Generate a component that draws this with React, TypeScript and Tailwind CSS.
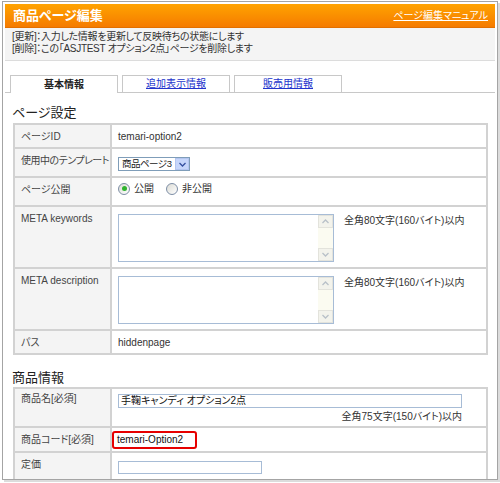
import React from 'react'

const NOTE = '全角80文字(160バイト)以内'

function Radio({ checked }: { checked?: boolean }) {
  return (
    <span className="w-[12px] h-[12px] rounded-full border border-[#7d8ea6] bg-gradient-to-br from-[#dcdcd6] to-white flex items-center justify-center">
      {checked && <span className="w-[5px] h-[5px] rounded-full bg-[#2fb32f]" />}
    </span>
  )
}

function Chevron({ up, color = '#b8c0c8' }: { up?: boolean; color?: string }) {
  return (
    <svg width="7" height="5" viewBox="0 0 7 5">
      <path d={up ? 'M0.5 4 L3.5 1 L6.5 4' : 'M0.5 1 L3.5 4 L6.5 1'} fill="none" stroke={color} strokeWidth="1.3" />
    </svg>
  )
}

function TextArea() {
  return (
    <div className="w-[216px] h-[48px] border border-[#a7bcd6] bg-white flex justify-end">
      <div className="w-[15px] h-full bg-[#fbfbf1] flex flex-col justify-between">
        <span className="h-[13px] border border-[#e3e3dc] bg-[#f3f3ec] flex items-center justify-center">
          <Chevron up />
        </span>
        <span className="h-[13px] border border-[#e3e3dc] bg-[#f3f3ec] flex items-center justify-center">
          <Chevron />
        </span>
      </div>
    </div>
  )
}

function Label({ children, className = '' }: { children: React.ReactNode; className?: string }) {
  return (
    <div className={`w-[97px] shrink-0 bg-[#f4f4f4] border-r-2 border-[#d2d2d2] pl-[6px] text-[#444] whitespace-nowrap ${className}`}>
      {children}
    </div>
  )
}

export default function App() {
  return (
    <div className="w-[500px] h-[483px] bg-white pt-px pl-[2px] text-[10px] leading-[12px] text-[#333] font-['Liberation_Sans','Noto_Sans_CJK_JP',sans-serif] [font-feature-settings:'palt']">
      <div className="w-[496px] h-[479px] border border-[#a4a4a4] p-[2px] overflow-hidden shadow-[2px_2px_0_#dcdcdc]">
        {/* Header */}
        <div className="h-[24px] bg-gradient-to-b from-[#ffa300] to-[#f57b00] border-b border-[#e27000] flex items-center justify-between pl-[8px] pr-[7px]">
          <span className="text-white text-[13px] font-bold leading-[16px]">商品ページ編集</span>
          <span className="text-white underline text-[10px]">ページ編集マニュアル</span>
        </div>

        {/* Messages */}
        <div className="bg-[#f4f4f4] border-b border-[#dcdcdc] pt-[3px] pb-[5px] pl-[7px] tracking-[-0.3px]">
          <p>[更新]：入力した情報を更新して反映待ちの状態にします</p>
          <p>[削除]：この「ASJTEST オプション2点」ページを削除します</p>
        </div>

        {/* Tabs */}
        <div className="mt-[14px] flex gap-[4px] border-b border-[#c8c8c8] pl-[5px]">
          <div className="w-[108px] h-[18px] -mb-px border border-b-0 border-[#c8c8c8] bg-white flex items-center justify-center font-bold text-[#222]">
            基本情報
          </div>
          <div className="w-[108px] h-[17px] border border-b-0 border-[#c8c8c8] bg-white flex items-center justify-center text-[#2233cc] underline">
            追加表示情報
          </div>
          <div className="w-[108px] h-[17px] border border-b-0 border-[#c8c8c8] bg-white flex items-center justify-center text-[#2233cc] underline">
            販売用情報
          </div>
        </div>

        {/* Page settings */}
        <h2 className="mt-[12px] mb-[2px] pl-[7px] text-[13px] leading-[16px] text-[#222]">ページ設定</h2>
        <div className="ml-[8px] w-[475px] border-2 border-b-0 border-[#d2d2d2]">
          <div className="flex h-[24px] border-b-2 border-[#d2d2d2]">
            <Label className="pt-[6px]">ページID</Label>
            <div className="pl-[6px] pt-[6px]">temari-option2</div>
          </div>
          <div className="flex h-[29px] border-b-2 border-[#d2d2d2]">
            <Label className="pt-[6px] tracking-[-0.5px]">使用中のテンプレート</Label>
            <div className="pl-[6px] pt-[8px]">
              <div className="w-[72px] h-[14px] border border-[#7f9db9] bg-white flex items-center justify-between pl-[3px] whitespace-nowrap">
                <span className="text-[#222] text-[9.5px] tracking-[-0.5px]">商品ページ3</span>
                <span className="w-[14px] h-[12px] shrink-0 bg-[#c6d6fb] border border-[#b4c6f0] flex items-center justify-center">
                  <Chevron color="#3450a0" />
                </span>
              </div>
            </div>
          </div>
          <div className="flex h-[29px] border-b-2 border-[#d2d2d2]">
            <Label className="pt-[6px]">ページ公開</Label>
            <div className="pl-[6px] pt-[6px] flex items-center gap-[4px] h-[13px] mt-px">
              <Radio checked />
              <span className="mr-[8px]">公開</span>
              <Radio />
              <span>非公開</span>
            </div>
          </div>
          <div className="flex h-[62px] border-b-2 border-[#d2d2d2]">
            <Label className="pt-[6px]">META keywords</Label>
            <div className="pl-[6px] pt-[7px] flex gap-[10px]">
              <TextArea />
              <span className="pt-px">{NOTE}</span>
            </div>
          </div>
          <div className="flex h-[62px] border-b-2 border-[#d2d2d2]">
            <Label className="pt-[6px]">META description</Label>
            <div className="pl-[6px] pt-[7px] flex gap-[10px]">
              <TextArea />
              <span className="pt-px">{NOTE}</span>
            </div>
          </div>
          <div className="flex h-[24px] border-b-2 border-[#d2d2d2]">
            <Label className="pt-[6px]">パス</Label>
            <div className="pl-[6px] pt-[6px]">hiddenpage</div>
          </div>
        </div>

        {/* Product info */}
        <h2 className="mt-[15px] mb-px pl-[7px] text-[13px] leading-[16px] text-[#222]">商品情報</h2>
        <div className="ml-[8px] w-[475px] border-2 border-b-0 border-[#d2d2d2]">
          <div className="flex h-[39px] border-b-2 border-[#d2d2d2]">
            <Label className="pt-[4px]">商品名[必須]</Label>
            <div className="pl-[6px] pt-[5px] flex flex-col items-end">
              <div className="w-[344px] h-[14px] border border-[#a7bcd6] bg-white pl-[2px] flex items-center text-[#111]">
                手鞠キャンディ オプション2点
              </div>
              <span className="mt-[3px]">全角75文字(150バイト)以内</span>
            </div>
          </div>
          <div className="flex h-[25px] border-b-2 border-[#d2d2d2]">
            <Label className="flex items-center">商品コード[必須]</Label>
            <div className="flex items-center">
              <span className="h-[18px] border-2 border-[#e60000] rounded-[3px] pl-[3px] pr-[12px] flex items-center text-[#111]">
                temari-Option2
              </span>
            </div>
          </div>
          <div className="flex h-[30px] border-b-2 border-[#d2d2d2]">
            <Label className="pt-[6px]">定価</Label>
            <div className="pl-[6px] pt-[8px]">
              <div className="w-[144px] h-[13px] border border-[#a7bcd6] bg-white" />
            </div>
          </div>
        </div>
      </div>
    </div>
  )
}
